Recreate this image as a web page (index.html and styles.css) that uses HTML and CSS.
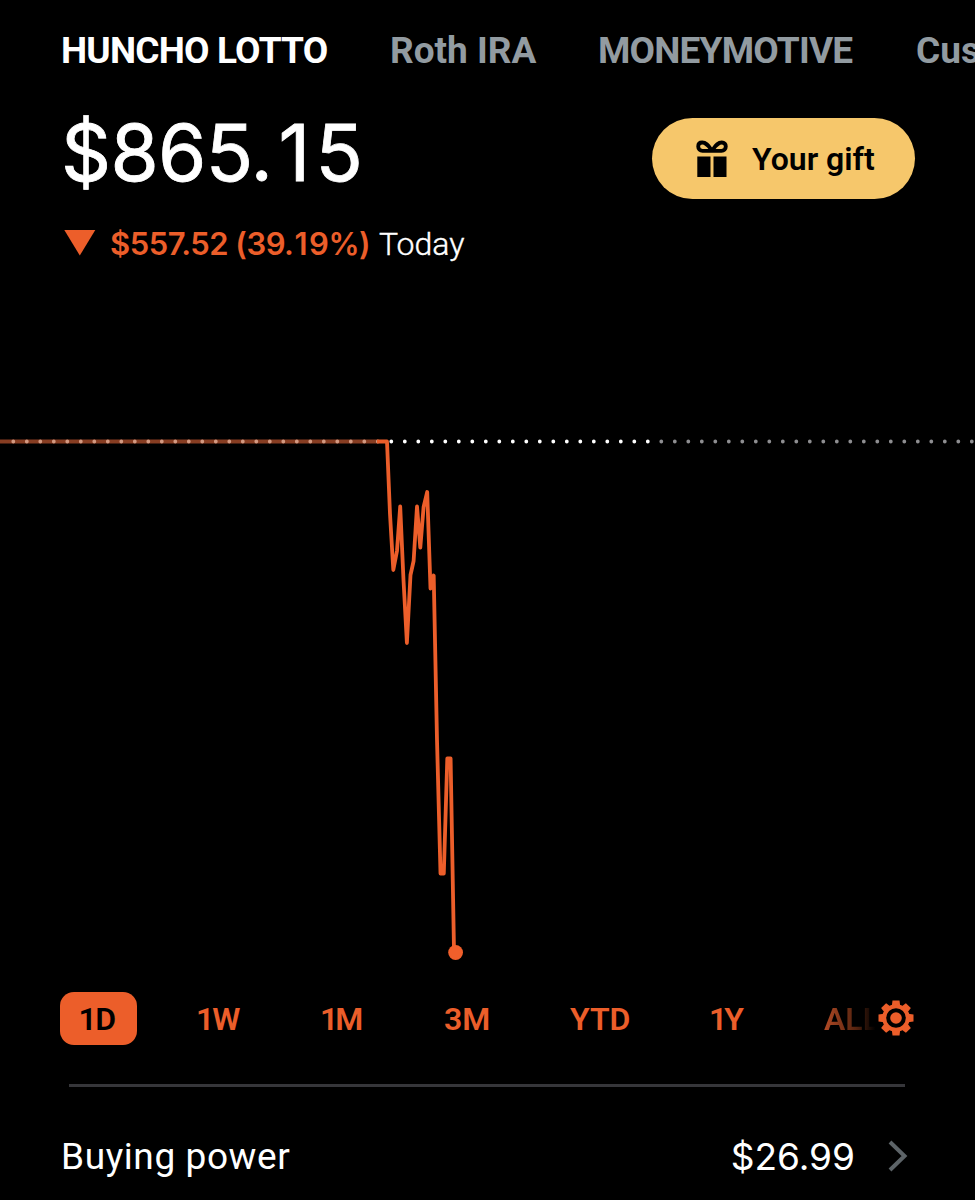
FILE: index.html
```
<!DOCTYPE html>
<html lang="en">
<head>
<meta charset="utf-8">
<title>Portfolio</title>
<link rel="stylesheet" href="styles.css">
</head>
<body>
<nav class="accounts">
  <span class="account account-active">HUNCHO LOTTO</span>
  <span class="account account-roth">Roth IRA</span>
  <span class="account account-motive">MONEYMOTIVE</span>
  <span class="account account-custodial">Cus</span>
</nav>
<header class="summary">
  <div class="balance">$865.<span class="one">1</span>5</div>
  <button class="gift">
    <svg class="gift-icon" width="32" height="38" viewBox="0 0 32 38">
      <path d="M1.3 16.5h13.2V37H1.3zM17.5 16.5h13V37h-13z"/>
      <path d="M16 10.5C12.500 6 10.500 2.500 6.200 2.500C3.600 2.500 2.200 4.200 2.200 6.500C2.200 9.200 4 10.800 6.500 10.800H25.500C28 10.800 29.800 9.200 29.800 6.500C29.800 4.200 28.400 2.500 25.800 2.500C21.500 2.500 19.500 6 16 10.500Z" fill="none" stroke="#000" stroke-width="3.800" stroke-linejoin="round"/>
    </svg>
    <span class="gift-label">Your gift</span>
  </button>
</header>
<div class="change">
  <svg class="down" width="32" height="26" viewBox="0 0 32 26"><path d="M.3 0h31L15.800 25.500z" fill="#ec5e2a"/></svg>
  <span class="loss">$557.52 (39.<span class="one-small">1</span>9%)</span>
  <span class="today">Today</span>
</div>
<svg class="chart" width="975" height="560" viewBox="0 420 975 560">
  <path d="M0 441.500H377" class="line-past"/>
  <path d="M0 441.500H382" class="dots dots-past"/>
  <path d="M391.300 441.500H650" class="dots dots-open"/>
  <path d="M661.300 441.500H975" class="dots dots-late"/>
  <path class="line" d="M377 441.500H387L390 514L393.300 570L397 551L400.200 506.500L403.500 580L406.900 643L410.500 575L413.600 561L417 506.500L420.300 547.500L423.600 507L427.200 492L430.500 588.500L433.700 575.500L437 740L440.500 873.500H443.800L447.300 758.500H450.600L454 950"/>
  <circle cx="455.600" cy="952.500" r="7.400" fill="#f05f2b"/>
</svg>
<div class="ranges">
  <span class="range range-active">1D</span>
  <span class="range r-1w">1W</span>
  <span class="range r-1m">1M</span>
  <span class="range r-3m">3M</span>
  <span class="range r-ytd">YTD</span>
  <span class="range r-1y">1Y</span>
  <span class="range r-all">ALL</span>
  <svg class="gear" width="36" height="36" viewBox="-18 -18 36 36">
    <g fill="#ec5e2a">
      <path id="tooth" d="M-4.200-12L-3.500-17.500H3.500L4.200-12Z"/>
      <use href="#tooth" transform="rotate(45)"/><use href="#tooth" transform="rotate(90)"/><use href="#tooth" transform="rotate(135)"/>
      <use href="#tooth" transform="rotate(180)"/><use href="#tooth" transform="rotate(225)"/><use href="#tooth" transform="rotate(270)"/><use href="#tooth" transform="rotate(315)"/>
      <circle r="5.800"/>
    </g>
    <circle r="11.800" fill="none" stroke="#ec5e2a" stroke-width="4"/>
  </svg>
</div>
<hr class="rule">
<div class="power">
  <span class="power-label">Buying power</span>
  <span class="power-value">$26.99</span>
  <svg class="chevron" width="20" height="32" viewBox="0 0 20 32"><path d="M2 2L16.500 16L2 30" fill="none" stroke="#5d6468" stroke-width="4"/></svg>
</div>
</body>
</html>
```
FILE: styles.css
```
body {
  margin: 0;
  width: 975px;
  height: 1200px;
  overflow: hidden;
  background: #000;
  color: #fff;
  font-family: Roboto, "Liberation Sans", sans-serif;
  white-space: nowrap;
}
.accounts {
  display: flex;
  height: 100px;
  padding-left: 61px;
  overflow: hidden;
  font-size: 37px;
  font-weight: 700;
  line-height: 101px;
  color: #929ba1;
}
.account { flex: none; }
.account-active { width: 329px; color: #fff; letter-spacing: -.8px; }
.account-roth { width: 208px; }
.account-motive { width: 318px; letter-spacing: -.8px; }
.summary {
  display: flex;
  justify-content: space-between;
  height: 110px;
  padding: 0 60px 0 61px;
}
.balance {
  font-family: Inter, sans-serif;
  font-size: 78px;
  line-height: 105px;
  letter-spacing: -.6px;
  -webkit-text-stroke: .8px #fff;
}
.one { margin: 0 6px 0 6px; }
.gift {
  display: flex;
  align-items: center;
  box-sizing: border-box;
  width: 263px;
  height: 81px;
  margin-top: 18px;
  padding: 0 0 0 44px;
  border: 0;
  border-radius: 41px;
  background: #f6c76b;
  color: #000;
  font: 600 32px Roboto, sans-serif;
}
.gift-label { margin-left: 24px; }
.change {
  display: flex;
  height: 210px;
  padding-left: 64px;
  font-size: 32px;
  line-height: 68px;
}
.down { margin-top: 20px; }
.loss {
  width: 269px;
  margin-left: 14px;
  color: #ec5e2a;
  font-family: Inter, sans-serif;
  font-weight: 600;
  font-size: 31px;
  letter-spacing: -.5px;
}
.one-small { margin: 0 2px 0 1px; }
.today { font-weight: 300; -webkit-text-stroke: .4px #fff; }
.chart { display: block; }
.dots { fill: none; stroke-linecap: round; stroke-width: 3.800; stroke-dasharray: 0 13.500; }
.dots-past { stroke: #d39a82; stroke-dashoffset: .2; }
.dots-open { stroke: #fff; }
.dots-late { stroke: #8e8e91; }
.line-past { stroke: #873d22; stroke-width: 4; }
.line { fill: none; stroke: #ec5e2a; stroke-width: 3.800; stroke-linejoin: round; }
.ranges {
  display: flex;
  height: 104px;
  padding: 12px 0 0 60px;
  box-sizing: border-box;
  color: #ec5e2a;
  font-size: 32px;
  font-weight: 600;
  line-height: 55px;
}
.range { flex: none; }
.range-active {
  box-sizing: border-box;
  width: 77px;
  height: 53px;
  margin-right: 59px;
  padding-right: 4px;
  border-radius: 14px;
  background: #ec5e2a;
  color: #000;
  text-align: center;
  letter-spacing: -1.5px;
}
.r-1w { width: 124px; letter-spacing: -2px; }
.r-1m { width: 124px; letter-spacing: -3px; }
.r-3m { width: 126px; }
.r-ytd { width: 139px; }
.r-1y { width: 115px; letter-spacing: -3px; }
.r-all {
  width: 54px;
  background: linear-gradient(90deg, #b24a25, #54230f 60%, #000 95%);
  background-clip: text;
  color: transparent;
}
.gear { margin-top: 8px; }
.rule {
  width: 836px;
  height: 3px;
  margin: 0 0 0 69px;
  border: 0;
  background: #36363a;
}
.power {
  display: flex;
  align-items: center;
  height: 113px;
  margin-top: 12px;
  padding: 0 67px 0 61px;
  font-size: 37px;
  line-height: 116px;
}
.power-label { padding-top: 2px; letter-spacing: .6px; }
.power-value {
  margin-left: auto;
  padding-top: 2px;
  font-family: Inter, sans-serif;
  font-size: 37px;
  line-height: 112px;
}
.chevron { margin-left: 33px; }
```
